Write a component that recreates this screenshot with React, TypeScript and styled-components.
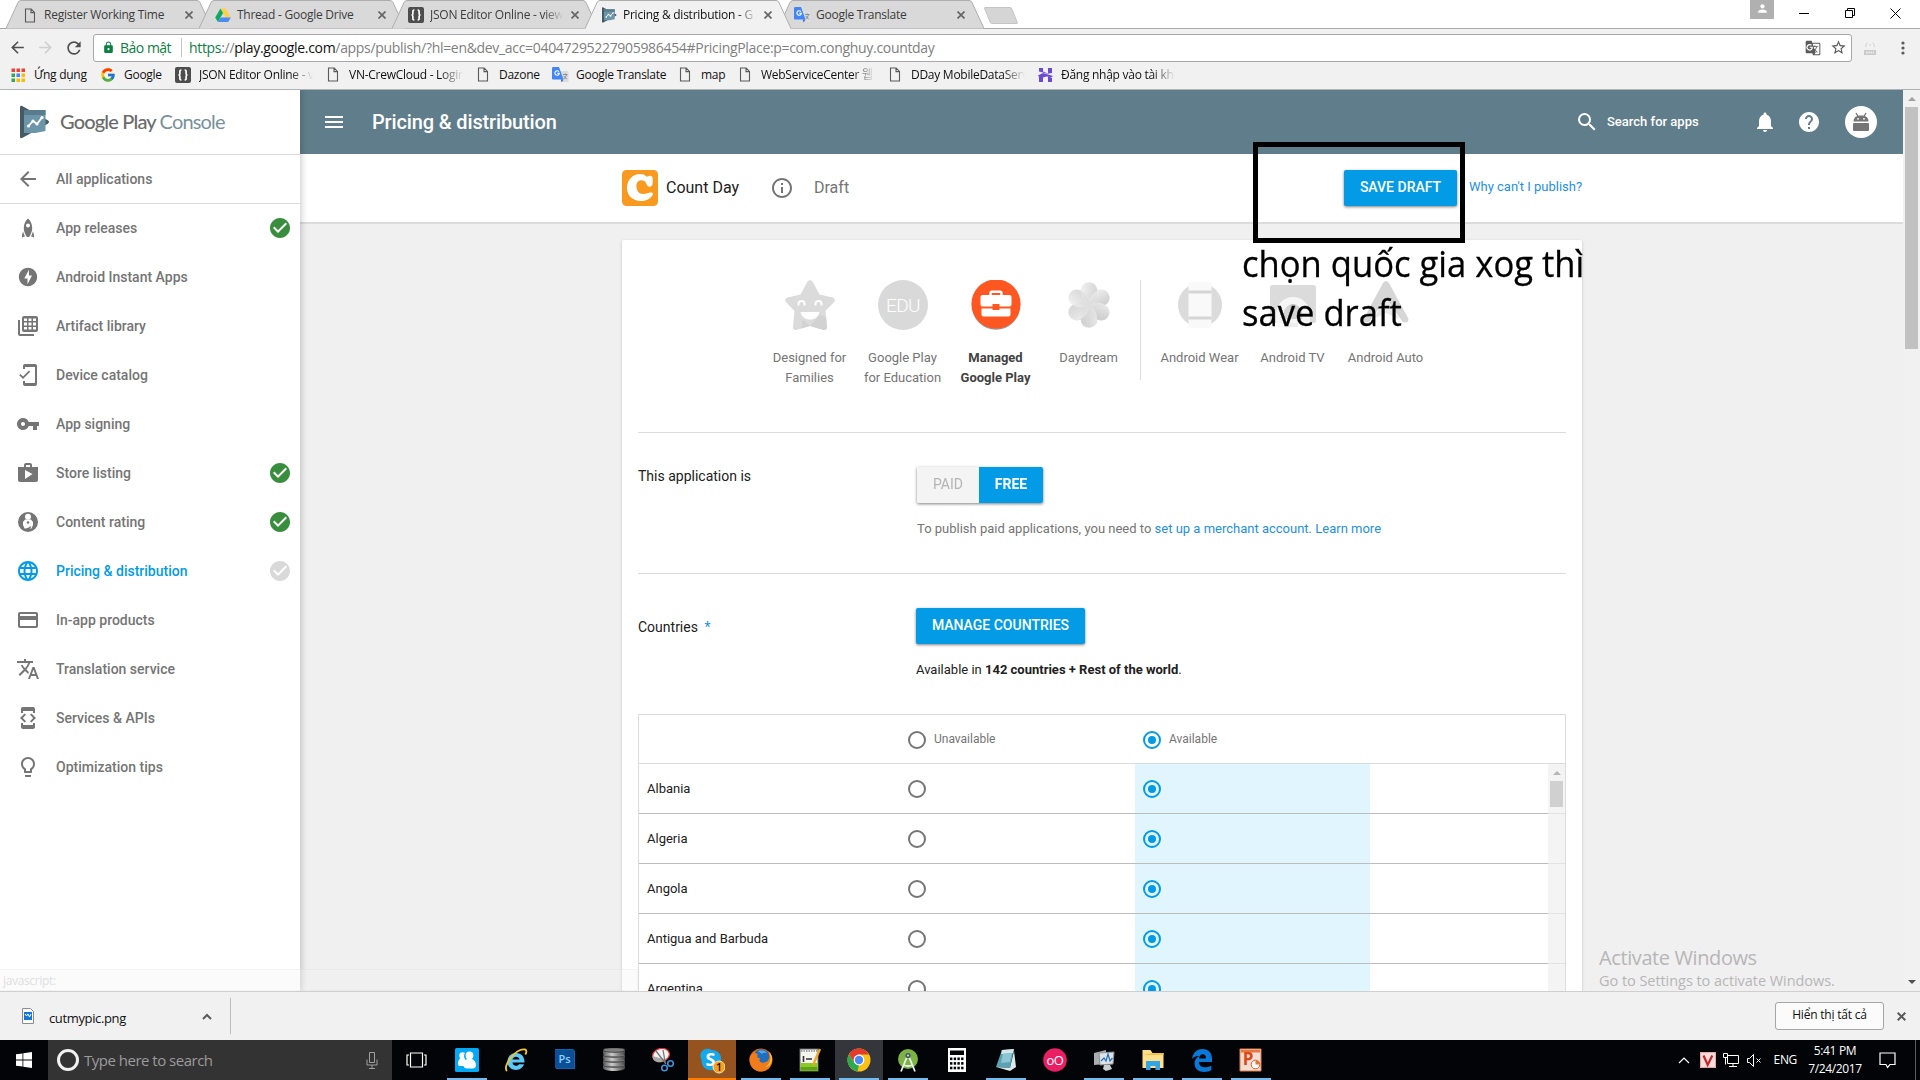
import React from "react";
import styled, { createGlobalStyle, css } from "styled-components";
import {
  MdArrowBack, MdArrowForward, MdRefresh, MdLock, MdMenu, MdSearch, MdNotifications, MdHelp,
  MdOfflineBolt, MdMobileFriendly, MdVpnKey, MdShop, MdLanguage, MdCreditCard, MdTranslate,
  MdDeveloperMode, MdLightbulbOutline, MdCheckCircle, MdInfoOutline, MdStarBorder, MdPerson,
  MdGTranslate,
} from "react-icons/md";
import { FcGoogle } from "react-icons/fc";

const UI = `"Open Sans", "Noto Sans", "Noto Sans CJK KR", sans-serif`;
const ROBOTO = `Roboto, "Liberation Sans", sans-serif`;

const Global = createGlobalStyle`
  * { box-sizing: border-box; }
  html, body { margin: 0; padding: 0; overflow: hidden; }
  svg { display: block; flex: none; }
`;

const Screen = styled.div`
  position: relative;
  display: flex;
  flex-direction: column;
  width: 1920px;
  height: 1080px;
  overflow: hidden;
  background: #f0f0f0;
  font-family: ${ROBOTO};
`;

/* ---------- browser frame ---------- */
const TabStrip = styled.div`
  display: flex;
  height: 29px;
  flex: none;
  padding-left: 6px;
  background: #fff;
  border-bottom: 1px solid #a9a9a9;
`;
const TabBox = styled.div<{ $active?: boolean }>`
  display: grid;
  grid-template-columns: 206px;
  width: 206px;
  height: 29px;
  margin-right: -13px;
  z-index: ${(p) => (p.$active ? 2 : 1)};
  > * { grid-area: 1 / 1; }
`;
const TabContent = styled.div`
  display: flex;
  align-items: center;
  height: 29px;
  padding: 1px 19px 0 16px;
`;
const TabIcon = styled.div`
  width: 16px;
  margin-right: 6px;
  display: flex;
  justify-content: center;
`;
const TabTitle = styled.span<{ $active?: boolean; $fade?: boolean }>`
  flex: 1;
  min-width: 0;
  margin-right: 8px;
  overflow: hidden;
  white-space: nowrap;
  font: 12px/18px ${UI};
  letter-spacing: -0.25px;
  color: ${(p) => (p.$active ? "#111" : "#3c3c3c")};
  ${(p) => p.$fade && css`mask-image: linear-gradient(90deg, #000 86%, transparent 100%);`}
`;
const NewTab = styled.div`
  width: 28px;
  height: 17px;
  margin: 7px 0 0 16px;
  background: #d5d5d5;
  border: 1px solid #c4c4c4;
  border-radius: 2px;
  transform: skewX(22deg);
`;
const WindowControls = styled.div`
  display: flex;
  margin-left: auto;
  padding-right: 19px;
  svg { margin-top: 8px; }
`;
const ProfileBadge = styled.div`
  display: flex;
  justify-content: center;
  width: 24px;
  height: 19px;
  margin-right: 25px;
  background: #b0b0b0;
  && svg { margin-top: 2px; }
`;
const Toolbar = styled.div`
  display: flex;
  align-items: center;
  flex: none;
  height: 35px;
  padding: 2px 0 0 8px;
  background: #f1f1f1;
  color: #4f4f4f;
`;
const NavButtons = styled.div`
  display: flex;
  align-items: center;
  gap: 9px;
  width: 85px;
`;
const AddressBar = styled.div`
  display: flex;
  align-items: center;
  width: 1759px;
  height: 28px;
  padding: 0 4px 0 8px;
  background: #fff;
  border: 1px solid #a8a8a8;
  border-radius: 3px;
`;
const Secure = styled.span`
  width: 62px;
  margin-left: 5px;
  border-right: 1px solid #c4c4c4;
  color: #0b8043;
  font: 14px/19px ${UI};
  letter-spacing: -0.5px;
  white-space: nowrap;
`;
const Url = styled.span`
  flex: 1;
  margin-left: 7px;
  padding-bottom: 1px;
  color: #808080;
  font: 14px/19px ${UI};
  letter-spacing: -0.315px;
  white-space: nowrap;
  b { font-weight: 400; color: #0b8043; }
  i { font-style: normal; color: #111; }
`;
const AddressIcons = styled.div`
  display: flex;
  align-items: center;
  gap: 9px;
`;
const Bookmarks = styled.div`
  display: flex;
  align-items: center;
  flex: none;
  height: 26px;
  padding: 0 0 4px 10px;
  background: #f1f1f1;
  border-bottom: 1px solid #aeb3b3;
`;
const Bookmark = styled.div<{ $w: number; $fade?: boolean }>`
  display: flex;
  align-items: center;
  width: ${(p) => p.$w}px;
  span {
    width: ${(p) => p.$w - (p.$fade ? 36 : 25)}px;
    margin-left: 8px;
    overflow: hidden;
    white-space: nowrap;
    color: #111;
    font: 12px/19px ${UI};
    letter-spacing: -0.27px;
    ${(p) => p.$fade && css`mask-image: linear-gradient(90deg, #000 80%, transparent 100%);`}
  }
`;
const BookmarkIcon = styled.div`
  display: flex;
  justify-content: center;
  width: 16px;
  flex: none;
`;

/* ---------- page frame ---------- */
const Page = styled.div`
  display: flex;
  flex: none;
  height: 901px;
  overflow: hidden;
`;
const Sidebar = styled.nav`
  width: 300px;
  flex: none;
  background: #fff;
  box-shadow: 0 0 8px rgba(0, 0, 0, 0.28);
  z-index: 3;
`;
const LogoRow = styled.div`
  display: flex;
  align-items: center;
  height: 65px;
  padding-left: 18px;
  border-bottom: 1px solid #dcdcdc;
`;
const LogoText = styled.div`
  margin: 0 0 3px 10px;
  color: #6b6b6b;
  font: 500 20px/28px Lato, sans-serif;
  letter-spacing: -0.83px;
  white-space: nowrap;
  span { color: #78909c; font-weight: 400; }
`;
const NavItem = styled.div<{ $active?: boolean; $line?: boolean }>`
  display: flex;
  align-items: center;
  height: 49px;
  padding: 0 10px ${(p) => (p.$line ? 0 : 1)}px 16px;
  color: ${(p) => (p.$active ? "#039be5" : "#757575")};
  font-size: 14px;
  font-weight: 500;
  border-bottom: ${(p) => (p.$line ? "1px solid #dcdcdc" : "0")};
  > span { flex: 1; margin-left: 16px; }
`;
const Main = styled.main`
  display: flex;
  flex-direction: column;
  width: 1603px;
  flex: none;
`;
const Header = styled.header`
  display: flex;
  align-items: center;
  flex: none;
  height: 64px;
  padding: 0 26px 0 22px;
  background: #607d8b;
  color: #fff;
`;
const HeaderTitle = styled.h1`
  flex: 1;
  margin: 0 0 0 26px;
  font-size: 20px;
  font-weight: 500;
  letter-spacing: -0.14px;
`;
const SearchLabel = styled.span`
  width: 146px;
  margin: 0 0 1px 8px;
  font-size: 13px;
  font-weight: 500;
`;
const Avatar = styled.div`
  display: flex;
  align-items: center;
  justify-content: center;
  width: 32px;
  height: 32px;
  margin-left: 24px;
  border-radius: 50%;
  background: #fff;
`;
const SubHeader = styled.div`
  display: flex;
  align-items: center;
  flex: none;
  height: 70px;
  padding: 0 322px;
  background: #fff;
  border-bottom: 2px solid #dcdcdc;
`;
const AppName = styled.span`
  width: 104px;
  margin: 0 0 2px 8px;
  color: #212121;
  font-size: 16px;
`;
const DraftLabel = styled.span`
  flex: 1;
  margin: 0 0 2px 20px;
  color: #757575;
  font-size: 16px;
`;
const Button = styled.button<{ $w: number }>`
  width: ${(p) => p.$w}px;
  height: 36px;
  padding: 0 0 2px;
  border: 0;
  border-radius: 2px;
  background: #039be5;
  box-shadow: 0 1px 3px rgba(0, 0, 0, 0.5);
  color: #fff;
  font: 500 14px/16px ${ROBOTO};
  white-space: nowrap;
`;
const Link = styled.a`
  color: #1e90e6;
  font-size: 13px;
`;
const WhyLink = styled(Link)`
  width: 112px;
  margin: 0 0 3px 12px;
  white-space: nowrap;
`;
const Card = styled.section`
  width: 960px;
  flex: none;
  height: 800px;
  margin: 16px 0 0 322px;
  padding: 40px 16px 0;
  border-radius: 2px;
  background: #fff;
  box-shadow: 0 1px 3px rgba(0, 0, 0, 0.22);
`;
const Programs = styled.div`
  display: flex;
  height: 153px;
  padding-left: 125px;
  border-bottom: 1px solid #dcdcdc;
`;
const Program = styled.div<{ $on?: boolean }>`
  display: flex;
  flex-direction: column;
  align-items: center;
  width: 93px;
  color: ${(p) => (p.$on ? "#424242" : "#757575")};
  font-size: 13px;
  font-weight: ${(p) => (p.$on ? 700 : 400)};
  line-height: 20px;
  text-align: center;
  white-space: pre-line;
  svg { margin-bottom: 18px; }
`;
const Divider = styled.div`
  width: 1px;
  height: 100px;
  margin: 0 12px 0 5px;
  background: #dcdcdc;
`;
const Section = styled.div<{ $h: number; $line?: boolean }>`
  display: flex;
  height: ${(p) => p.$h}px;
  border-bottom: ${(p) => (p.$line ? "1px solid #dcdcdc" : "0")};
`;
const SectionLabel = styled.div<{ $top: number }>`
  width: 278px;
  padding-top: ${(p) => p.$top}px;
  color: #212121;
  font-size: 14px;
  line-height: 20px;
  em { margin-left: 3px; color: #1e90e6; font-style: normal; }
`;
const SectionBody = styled.div`
  padding-top: 34px;
`;
const Toggle = styled.div`
  display: flex;
  width: 126px;
  height: 36px;
  margin-left: 1px;
  border-radius: 2px;
  overflow: hidden;
  background: #f4f4f4;
`;
const ToggleShadow = styled.div`
  width: 127px;
  filter: drop-shadow(0 1px 1.5px rgba(0, 0, 0, 0.5));
`;
const ToggleOption = styled.div<{ $on?: boolean }>`
  width: ${(p) => (p.$on ? 64 : 62)}px;
  background: ${(p) => (p.$on ? "#039be5" : "#f4f4f4")};
  color: ${(p) => (p.$on ? "#fff" : "#b4b4b4")};
  font-size: 14px;
  font-weight: ${(p) => (p.$on ? 700 : 400)};
  line-height: 35px;
  text-align: center;
`;
const Note = styled.p<{ $dark?: boolean }>`
  margin: 16px 0 0 ${(p) => (p.$dark ? 0 : 1)}px;
  color: ${(p) => (p.$dark ? "#212121" : "#757575")};
  font-size: 13px;
  line-height: 20px;
  b { font-weight: 700; }
`;
const Table = styled.div`
  display: flex;
  flex-direction: column;
  border: 1px solid #dcdcdc;
  width: 928px;
`;
const TableHead = styled.div`
  display: flex;
  height: 49px;
  border-bottom: 1px solid #dcdcdc;
  color: #757575;
  font-size: 12px;
`;
const TableBody = styled.div`
  display: flex;
`;
const Rows = styled.div`
  width: 909px;
`;
const ChoiceCell = styled.div<{ $tint?: boolean }>`
  display: flex;
  align-items: center;
  gap: 8px;
  width: 235px;
  padding-left: 8px;
  background: ${(p) => (p.$tint ? "#e1f5fe" : "transparent")};
`;
const Row = styled.div`
  display: flex;
  height: 50px;
  border-bottom: 1px solid #bdbdbd;
  color: #212121;
  font-size: 13px;
  ${ChoiceCell} { padding-bottom: 1px; }
`;
const NameCell = styled.div`
  display: flex;
  align-items: center;
  width: 261px;
  padding-left: 8px;
`;
const Radio = styled.span<{ $on?: boolean }>`
  display: flex;
  align-items: center;
  justify-content: center;
  width: 18px;
  height: 18px;
  margin-top: 2px;
  border: 2px solid ${(p) => (p.$on ? "#039be5" : "#757575")};
  border-radius: 50%;
  &::after {
    content: "";
    width: 8px;
    height: 8px;
    border-radius: 50%;
    background: ${(p) => (p.$on ? "#039be5" : "transparent")};
  }
`;
const InnerScroll = styled.div`
  display: flex;
  flex-direction: column;
  align-items: center;
  width: 17px;
  padding-top: 7px;
  background: repeating-linear-gradient(#f4f4f4 0 49px, #e2e2e2 49px 50px);
`;
const Arrow = styled.i<{ $down?: boolean; $c: string; $s: number }>`
  border: ${(p) => p.$s}px solid transparent;
  border-bottom: ${(p) => (p.$down ? "0" : `${p.$s}px solid ${p.$c}`)};
  border-top: ${(p) => (p.$down ? `${p.$s}px solid ${p.$c}` : "0")};
`;
const InnerThumb = styled.div`
  width: 13px;
  height: 26px;
  margin-top: 6px;
  background: #d0d0d0;
`;
const PageScroll = styled.div`
  display: flex;
  flex-direction: column;
  align-items: center;
  width: 17px;
  padding: 7px 0 7px;
  background: #f1f1f1;
`;
const PageThumb = styled.div`
  width: 13px;
  height: 242px;
  margin: 6px 0 auto;
  background: #c1c1c1;
`;

/* ---------- download bar and taskbar ---------- */
const Downloads = styled.div`
  display: flex;
  align-items: center;
  flex: none;
  height: 49px;
  padding: 0 14px 0 20px;
  background: #f1f1f1;
  border-top: 1px solid #cfcfcf;
  color: #111;
`;
const DownloadItem = styled.div`
  display: flex;
  align-items: center;
  width: 211px;
  height: 36px;
  border-right: 1px solid #bdbdbd;
  span { flex: 1; margin: 4px 0 0 13px; font: 13px/18px ${UI}; letter-spacing: -0.36px; }
  > svg:last-child { margin-right: 18px; }
`;
const ShowAll = styled.button`
  width: 109px;
  height: 28px;
  margin: 0 13px 0 auto;
  padding: 0 0 2px;
  background: #fbfbfb;
  border: 1px solid #a5a5a5;
  border-radius: 3px;
  color: #111;
  font: 12px/18px ${UI};
  letter-spacing: -0.2px;
`;
const Taskbar = styled.div`
  display: flex;
  flex: none;
  height: 40px;
  background: #020408;
  color: #fff;
`;
const Start = styled.div`
  display: flex;
  align-items: center;
  justify-content: center;
  width: 48px;
`;
const SearchBox = styled.div`
  display: flex;
  align-items: center;
  width: 344px;
  padding: 0 14px 0 9px;
  background: #333;
  color: #9b9b9b;
  span { flex: 1; margin-left: 5px; font: 15px/20px ${UI}; letter-spacing: -0.5px; }
`;
const Ring = styled.div`
  width: 22px;
  height: 22px;
  border: 3px solid #f2f2f2;
  border-radius: 50%;
`;
const TaskSlot = styled.div<{ $open?: boolean; $bg?: string; $line?: string }>`
  display: flex;
  flex-direction: column;
  align-items: center;
  width: 49px;
  padding-top: 8px;
  background: ${(p) => p.$bg || "transparent"};
  background-clip: padding-box;
  border-right: 1px solid transparent;
  &::after {
    content: "";
    flex: none;
    width: ${(p) => (p.$line ? 48 : 40)}px;
    height: 2px;
    margin-top: auto;
    background: ${(p) => (p.$open ? p.$line || "#76b9ed" : "transparent")};
  }
`;
const TaskView = styled.div`
  display: flex;
  align-items: center;
  justify-content: center;
  width: 51px;
  padding-right: 3px;
`;
const Tray = styled.div`
  display: flex;
  align-items: center;
  margin-left: auto;
  padding-right: 4px;
  font: 12px/18px ${UI};
  letter-spacing: -0.35px;
`;
const TrayGlyph = styled.div<{ $w: number }>`
  display: flex;
  width: ${(p) => p.$w}px;
`;
const Clock = styled.div`
  width: 56px;
  margin: 0 16px 0 10px;
  text-align: center;
  line-height: 18px;
`;
const ShowDesktop = styled.div`
  width: 1px;
  height: 40px;
  margin-left: 19px;
  background: #5a5c60;
`;

/* ---------- overlays ---------- */
const HighlightBox = styled.div`
  position: absolute;
  left: 1253px;
  top: 142px;
  width: 212px;
  height: 101px;
  border: 5px solid #000;
  z-index: 5;
`;
const Annotation = styled.div`
  position: absolute;
  left: 1242px;
  top: 239px;
  color: #000;
  font: 36px/49px "Open Sans", "Noto Sans", sans-serif;
  white-space: pre;
  transform: scaleX(0.961);
  transform-origin: 0 0;
  -webkit-text-stroke: 0.3px #000;
  z-index: 5;
`;
const Watermark = styled.div`
  position: absolute;
  left: 1599px;
  top: 944px;
  color: #b6b6b6;
  font: 14.5px/18px ${UI};
  letter-spacing: -0.05px;
  white-space: nowrap;
  strong { display: block; font-size: 20px; line-height: 28px; font-weight: 400; letter-spacing: -0.4px; }
`;
const StatusBubble = styled.div`
  position: absolute;
  left: 0;
  top: 969px;
  width: 638px;
  height: 22px;
  padding-left: 3px;
  background: rgba(242, 242, 242, 0.3);
  border: 1px solid rgba(190, 190, 190, 0.12);
  border-left: 0;
  color: #dedede;
  font: 12px/22px ${UI};
  letter-spacing: -0.35px;
  z-index: 6;
`;

/* ---------- drawings ---------- */
const PageGlyph = () => (
  <svg width="12" height="15" viewBox="0 0 12 15" fill="none" stroke="#5a5a5a" strokeWidth="1.1">
    <path d="M1.5 1h5.7L10.5 4.4V14h-9zM7 1v3.6h3.5" />
  </svg>
);
const DriveGlyph = () => (
  <svg width="16" height="16" viewBox="0 0 16 16">
    <path d="M5.4 1.5h5.2l5.2 9h-5.2z" fill="#ffcf48" />
    <path d="M5.4 1.5l2.7 4.6-5.2 8.9L.2 10.5z" fill="#11a861" />
    <path d="M5.6 10.5h10.2L13.2 15H3z" fill="#4b8af5" />
  </svg>
);
const BracesGlyph = () => (
  <svg width="16" height="16" viewBox="0 0 16 16">
    <rect width="16" height="16" rx="2" fill="#4d4d4d" />
    <path d="M6.4 3C4.6 3 4.9 4 4.9 6S4.5 8 3.4 8c1.1 0 1.5 0 1.5 2s-.3 3 1.5 3M9.6 3c1.8 0 1.5 1 1.5 3s.4 2 1.5 2c-1.1 0-1.5 0-1.5 2s.3 3-1.5 3" fill="none" stroke="#fff" strokeWidth="1.7" />
  </svg>
);
const ConsoleGlyph = ({ w = 16, h = 16 }: { w?: number; h?: number }) => (
  <svg width={w} height={h} viewBox="0 0 32 34" preserveAspectRatio="none">
    <path d="M2 2.5C2 .8 3.2.3 4.6 1.2L29.8 15.3c1.6.9 1.6 2.5 0 3.4L4.6 32.8C3.2 33.7 2 33.2 2 31.5z" fill="#455a64" />
    <path d="M6 5h21.500v21l-10 2H6z" fill="#6b96aa" />
    <path d="M6 5h21.500v5H6z" fill="#587c8d" />
    <path d="M10.500 21l4.500-5 4 3 5-6.500" fill="none" stroke="#fff" strokeWidth="1.8" />
    <circle cx="10.500" cy="21" r="1.600" fill="#fff" /><circle cx="15" cy="16" r="1.600" fill="#fff" />
    <circle cx="19" cy="19" r="1.600" fill="#fff" /><circle cx="24" cy="12.500" r="1.600" fill="#fff" />
  </svg>
);
const TranslateGlyph = () => (
  <svg width="17" height="16" viewBox="0 0 17 16">
    <path d="M7 4h8.500q1 0 1 1v9q0 1-1 1H10z" fill="#dcdcdc" />
    <path d="M1.200 0H7l4.500 12.500H1.200Q0 12.500 0 11.300V1.200Q0 0 1.200 0z" fill="#4285f4" />
    <path d="M8.800 12.500h2.700L9.600 15.500z" fill="#3367d6" />
    <path d="M6.900 4.700A2.200 2.200 0 1 0 7.300 6.300H5.200" fill="none" stroke="#fff" strokeWidth="1.100" />
    <path d="M11 7.500h4.500M13.200 6.500v1M14.600 7.500q-.8 3-2.800 4.500M11.800 9q1 2 3 3" fill="none" stroke="#7d8a94" strokeWidth=".9" />
  </svg>
);
const AppsGlyph = () => (
  <svg width="14" height="14" viewBox="0 0 14 14">
    {["#ea4335", "#ea4335", "#ea4335", "#34a853", "#4285f4", "#fbbc05", "#34a853", "#fbbc05", "#fbbc05"].map((c, i) => (
      <rect key={i} x={(i % 3) * 5 + 0.500} y={Math.floor(i / 3) * 5 + 0.500} width="3.500" height="3.500" fill={c} />
    ))}
  </svg>
);
const HGlyph = () => (
  <svg width="15" height="16" viewBox="0 0 15 16" fill="#6a4bd0">
    <path d="M1 1h4v3.500l5 2V1h4v5L9.500 6.800 1 4.500zM1 15h4v-4.500L10 9v6h4v-4L5 7.500 1 9.500z" />
    <path d="M0 8.500L5 6l10 3-2 1.500-8-2.200L1 10z" />
  </svg>
);
const RocketGlyph = () => (
  <svg width="24" height="24" viewBox="0 0 24 24" fill="#757575">
    <path fillRule="evenodd" d="M12 2.500c3 2.500 4.200 6 4.200 9.500 0 2.800-.8 5-2 7l-1 2h-2.400l-1-2c-1.200-2-2-4.200-2-7 0-3.500 1.200-7 4.200-9.500zm0 5a2 2 0 1 0 0 4 2 2 0 0 0 0-4z" />
    <path d="M7.200 15.500c.4 2 1 3.500 1.900 4.800L6 21.500c0-2.500.2-4.500 1.200-6zM16.800 15.500c-.4 2-1 3.500-1.900 4.800l3.100 1.200c0-2.500-.2-4.500-1.200-6z" />
  </svg>
);
const GridGlyph = () => (
  <svg width="24" height="24" viewBox="0 0 24 24" fill="#757575">
    <path fillRule="evenodd" d="M8 2h12a2 2 0 0 1 2 2v12a2 2 0 0 1-2 2H8a2 2 0 0 1-2-2V4a2 2 0 0 1 2-2zm0 2.500V7h3V4.500zm4.500 0V7h3V4.500zm4.500 0V7h3V4.500zM8 8.500v3h3v-3zm4.500 0v3h3v-3zm4.500 0v3h3v-3zM8 13v2.500h3V13zm4.500 0v2.500h3V13zm4.500 0v2.500h3V13z" />
    <path d="M2 6h2v14h14v2H4a2 2 0 0 1-2-2z" />
  </svg>
);
const RatingGlyph = () => (
  <svg width="24" height="24" viewBox="0 0 24 24">
    <circle cx="12" cy="12" r="10" fill="#757575" />
    <circle cx="12" cy="6.700" r="3" fill="#fff" />
    <path d="M9 9.500h6l2 2.500v3l-1.500 3.500h-7L7 15v-3z" fill="#fff" />
    <circle cx="12" cy="12.500" r="1.300" fill="#757575" />
    <path d="M9.500 20.500c0-2 5-1.500 5-4" stroke="#757575" strokeWidth="1.600" fill="none" />
  </svg>
);
const DroidGlyph = () => (
  <svg width="18" height="20" viewBox="0 0 18 20" fill="#757575">
    <path d="M1.500 9.500C1.500 5 5 3.500 9 3.500s7.500 1.500 7.500 6z" />
    <path d="M4 1l1.800 3M14 1l-1.800 3" stroke="#757575" strokeWidth="1.300" />
    <rect x="1" y="11" width="16" height="8" rx="1" />
    <circle cx="6" cy="6.800" r=".9" fill="#fff" /><circle cx="12" cy="6.800" r=".9" fill="#fff" />
  </svg>
);
const CountDayGlyph = () => (
  <svg width="36" height="36" viewBox="0 0 36 36">
    <rect width="36" height="36" rx="4.500" fill="#f89a20" />
    <path d="M24.500 6.500C26 6.800 27 5.500 28.500 5.800c2 .5 2.300 2 2.300 4.500 0 3.500-.3 6.200-2.600 6.500-2.500.4-3-1.700-4.200-3.800-1-1.900-2.400-2.800-4.600-2.800-3.200 0-5 2.300-5 5.800 0 4.500 2.600 8 6.600 8 4.200 0 6.500-2.200 9.200-1.300 1.200.4.800 2-.4 3.500-2.300 3-6 4.800-10.800 4.800C10.500 31 5 25.500 5 18 5 10 10.500 4 18.500 4c2.300 0 4.200.8 6 2.500z" fill="#fff" />
  </svg>
);
const StarGlyph = () => (
  <svg width="50" height="50" viewBox="0 0 50 50">
    <path d="M22.500 1.500Q25-1.200 27.500 1.500L34.500 14.500 47.500 17.500Q51 18.800 49.300 21.800L40.500 31 42 47Q42 50.500 38.500 50L25 46 11.500 50Q8 50.500 8 47L9.500 31 .7 21.800Q-1 18.800 2.500 17.500L15.500 14.500z" fill="#dbdbdb" />
    <path d="M18 39.500L25 46l9.500-11 6.500 2 1 10Q42 50.500 38.500 50L25 46l-9 2.600z" fill="#d2d2d2" />
    <path d="M13.500 25.500v-1.500a3 3 0 0 1 6 0v1.500M30.500 25.500v-1.500a3 3 0 0 1 6 0v1.500" fill="none" stroke="#fff" strokeWidth="2" />
    <path d="M15.500 32h19c-1 5-5 7.500-9.500 7.500S16.500 37 15.500 32z" fill="#fff" />
  </svg>
);
const EduGlyph = () => (
  <svg width="50" height="50" viewBox="0 0 50 50">
    <circle cx="25" cy="25" r="25" fill="#d9d9d9" />
    <text x="25" y="31.800" textAnchor="middle" fontFamily="Roboto" fontWeight="300" fontSize="19" letterSpacing="-.6" fill="#fff">EDU</text>
  </svg>
);
const BriefcaseGlyph = () => (
  <svg width="50" height="50" viewBox="0 0 50 50">
    <circle cx="25" cy="25.800" r="24" fill="#9a9a9a" />
    <circle cx="25" cy="24" r="24.600" fill="#ff5722" />
    <path d="M19.500 16v-2.800a1.500 1.500 0 0 1 1.500-1.500h8a1.500 1.500 0 0 1 1.500 1.500V16" fill="none" stroke="#fff" strokeWidth="2.400" />
    <path d="M11.500 15h27a2 2 0 0 1 2 2v7.500a2 2 0 0 1-2 2H28.500V24h-7v2.500h-10a2 2 0 0 1-2-2V17a2 2 0 0 1 2-2z" fill="#fff" />
    <path d="M10.500 28.500h11V30h7v-1.500h11V34.500a2 2 0 0 1-2 2h-25a2 2 0 0 1-2-2z" fill="#fff" />
  </svg>
);
const DaydreamGlyph = () => (
  <svg width="50" height="50" viewBox="0 0 50 50">
    <defs>
      <linearGradient id="petal" gradientUnits="userSpaceOnUse" x1="10" y1="8" x2="40" y2="42">
        <stop offset="0" stopColor="#ebebeb" /><stop offset="1" stopColor="#d0d0d0" />
      </linearGradient>
      <linearGradient id="shade" gradientUnits="userSpaceOnUse" x1="17" y1="0" x2="34" y2="0">
        <stop offset="0" stopColor="#fff" stopOpacity=".45" /><stop offset="1" stopColor="#bbb" stopOpacity=".3" />
      </linearGradient>
    </defs>
    <circle cx="25" cy="25" r="13" fill="url(#petal)" />
    {[0, 60, 120, 180, 240, 300].map((a) => {
      const r = ((a - 90) * Math.PI) / 180;
      return <circle key={a} cx={25 + 14 * Math.cos(r)} cy={25 + 14.500 * Math.sin(r)} r="8.300" fill="url(#petal)" />;
    })}
    {[0, 60, 120, 180, 240, 300].map((a) => (
      <path key={a} d="M25 25C17 20 15 11 19 5 24 0 33 2 33.300 10.500 33 17 30 21 25 25z" fill="url(#shade)" transform={`rotate(${a} 25 25)`} />
    ))}
  </svg>
);
const WearGlyph = () => (
  <svg width="50" height="50" viewBox="0 0 50 50">
    <circle cx="25" cy="25" r="22" fill="#dbdbdb" />
    <rect x="13.500" y="2" width="23" height="46" fill="#f9f9f9" />
    <path d="M13.500 10.500h23v3h-23zM13.500 36.500h23v3h-23z" fill="#d5d5d5" />
  </svg>
);
const TvGlyph = () => (
  <svg width="50" height="50" viewBox="0 0 50 50">
    <rect x="2" y="5" width="46" height="38" rx="2.500" fill="#dbdbdb" />
    <path d="M8 34a17 17 0 0 1 34 0v9H8z" fill="#f6f6f6" />
    <path d="M16 33a9 9 0 0 1 18 0v6H16z" fill="#d5d5d5" />
    <circle cx="25" cy="27" r="3" fill="#c4c4c4" />
    <path d="M20 43h10v4H20z" fill="#eee" />
  </svg>
);
const AutoGlyph = () => (
  <svg width="50" height="50" viewBox="0 0 50 50">
    <path d="M22 3q3-4 6 0l19 35q1.500 4-2 4.500-2 .3-4-1.500L25 18 9 41q-2 1.800-4 1.500-3.500-.5-2-4.500z" fill="#d6d6d6" />
    <path d="M25 17l13 22-13-6-13 6z" fill="#e9e9e9" />
  </svg>
);
const SnipGlyph = () => (
  <svg width="24" height="24" viewBox="0 0 24 24">
    <ellipse cx="10" cy="7" rx="8.500" ry="6.500" fill="#f2f2f2" stroke="#d9333a" strokeWidth="1.300" transform="rotate(-15 10 7)" />
    <path d="M1.500 8c0 5 4 7 9 6l5-3-7-1z" fill="#a9a9a9" />
    <path d="M5 3l10 13M12 2l2.500 14" stroke="#777" strokeWidth="1.300" />
    <circle cx="13.500" cy="20" r="2.800" fill="none" stroke="#3d8fd8" strokeWidth="1.600" />
    <circle cx="19.500" cy="15.500" r="2.800" fill="none" stroke="#3d8fd8" strokeWidth="1.600" />
  </svg>
);

const taskIcons: { el: React.ReactNode; open?: boolean; bg?: string; line?: string }[] = [
  { open: true, el: <svg width="24" height="24" viewBox="0 0 24 24"><rect width="24" height="24" rx="1.500" fill="#03a9f4" /><g fill="#fff"><circle cx="7.500" cy="7.500" r="3.200" /><path d="M3 16c0-4 2-6.500 4.500-6.500s4 2 4 4L9 18H5q-2 0-2-2z" /><circle cx="14" cy="8" r="5" fill="#03a9f4" /><circle cx="14.500" cy="7.500" r="3.900" /><path d="M8.500 17.500c0-4 2.500-7 5.800-7 4.200 0 6.700 3.500 6.700 6.500 0 2.800-2 3.500-4 3.500h-4.700q-3.800 0-3.800-3z" /></g></svg> },
  { el: <svg width="24" height="24" viewBox="0 0 24 24"><path d="M20.500 14.500H8.500c.3 3.500 4.500 4.500 6.500 1.800h5c-1.500 4-4.500 5.700-8 5.700-5.500 0-8.500-4-8.500-8.500C3.500 8.500 7.200 5 12 5c5.500 0 8.700 4 8.500 9.500zM8.500 11.500h7c-.5-3.500-6-3.800-7 0z" fill="#5cc8f5" /><path d="M3 23C-2 18 12 0 21 1.500c2 .5 1.500 3 .3 5" fill="none" stroke="#f2c230" strokeWidth="1.900" /></svg> },
  { el: <svg width="24" height="24" viewBox="0 0 24 24"><path d="M2 1h18l2 2v18H3z" fill="#0a66b5" /><rect x="2" y="2" width="19" height="18" fill="#0b4f96" /><text x="11.500" y="15" textAnchor="middle" fontFamily="Open Sans" fontWeight="600" fontSize="11" fill="#8fd0ff">Ps</text></svg> },
  { el: <svg width="24" height="24" viewBox="0 0 24 24"><defs><linearGradient id="disk"><stop offset="0" stopColor="#555" /><stop offset=".4" stopColor="#ccc" /><stop offset="1" stopColor="#444" /></linearGradient></defs>{[17, 12, 7, 2].map((y) => <g key={y}><path d={`M1 ${y}v3c0 4 22 4 22 0v-3z`} fill="url(#disk)" /><ellipse cx="12" cy={y} rx="11" ry="2.300" fill="#808080" stroke="#333" strokeWidth=".8" /></g>)}</svg> },
  { el: <SnipGlyph /> },
  { open: true, bg: "#95541f", line: "#ff7b00", el: <svg width="26" height="26" viewBox="0 0 26 26"><path d="M7 1c2-.5 4 0 5.500 1C19 2 23 7 22 12.500c2 4-1 8.500-5 9-8 2.500-15-1.500-14.500-10C0 7 2 2 7 1z" fill="#12a9ef" /><text x="11.500" y="18" textAnchor="middle" fontFamily="Open Sans" fontWeight="700" fontSize="18" fill="#fff">S</text><circle cx="20" cy="19" r="6" fill="#f9a01b" stroke="#ffe3a8" /><text x="20" y="23" textAnchor="middle" fontFamily="Open Sans" fontWeight="600" fontSize="10.500" fill="#111">1</text></svg> },
  { open: true, el: <svg width="24" height="24" viewBox="0 0 24 24"><circle cx="12" cy="12" r="11.500" fill="#e66000" /><circle cx="12.500" cy="9.500" r="8.300" fill="#1f6fc0" /><path d="M9 3q6-2 9 2-4-1-5 1z" fill="#5aa7e0" /><path d="M1 8c2-1 3-4 5-5-1 2 1 3 3 3-2 3 0 4 2 4-2 4 2 6 6 4 4-2 4-7 2.500-10.500C26 8 24 23 12 23.500 4 23.500-1 16 1 8z" fill="#f07c1c" /><path d="M19.500 4c4 5 2 12-3 15 6-1 8-8 5-13z" fill="#ffcb3c" /></svg> },
  { open: true, el: <svg width="24" height="24" viewBox="0 0 24 24"><rect x="2" y="1" width="18" height="22" fill="#f4f6ef" stroke="#666" /><path d="M2.500 15h17v8h-17z" fill="#8bc926" /><path d="M2.500 19h17v3.500h-17z" fill="#5ea317" /><path d="M5.500 8v6M8 11h6" stroke="#333" strokeWidth="1.600" /><path d="M3 3h16" stroke="#8a8a8a" strokeWidth="1.600" strokeDasharray="1.500 1" /><path d="M22 1l-7 16" stroke="#f0a52b" strokeWidth="2.400" /></svg> },
  { open: true, bg: "#33373c", el: <svg width="24" height="24" viewBox="0 0 24 24"><circle cx="12" cy="12" r="11.500" fill="#fbc116" /><path d="M2 6.200A11.500 11.500 0 0 1 22 6.500H12L7 14.700z" fill="#e33b2e" /><path d="M2 6.200L7 14.700 12 17l-1.500 6.400A11.500 11.500 0 0 1 2 6.200z" fill="#2da94f" /><circle cx="12" cy="12" r="5.400" fill="#fff" /><circle cx="12" cy="12" r="4.200" fill="#4a8af4" /></svg> },
  { open: true, el: <svg width="24" height="24" viewBox="0 0 24 24"><circle cx="12" cy="11" r="10" fill="#7cb342" /><path d="M5 23.500L11 9h2l6 14.500M7.500 17q4.500 2 9 0" stroke="#e9eef0" strokeWidth="1.800" fill="none" /><circle cx="12" cy="7.500" r="2.600" fill="#455a64" /><circle cx="12" cy="7.500" r="1.100" fill="#cfd8dc" /></svg> },
  { el: <svg width="24" height="24" viewBox="0 0 24 24"><rect x="3" width="18" height="24" fill="#fff" /><rect x="5" y="2.500" width="14" height="4.500" fill="#020408" />{[0, 1, 2, 3, 4, 5, 6, 7, 8, 9, 10, 11].map((n) => <rect key={n} x={5 + (n % 4) * 3.700} y={9.500 + Math.floor(n / 4) * 4.600} width="2.400" height="2.600" fill="#020408" />)}</svg> },
  { open: true, el: <svg width="24" height="24" viewBox="0 0 24 24"><path d="M8 2l12-1-4 19-14-1z" fill="#5aa3b5" /><path d="M8 2l12-1-1 4-12 1z" fill="#d5e6ea" /><path d="M2 19l14 1 4-17 2 16-6 4z" fill="#dfe9eb" /><path d="M9 6l9-1-2 9-9 1z" fill="#8cc6d3" /></svg> },
  { el: <svg width="24" height="24" viewBox="0 0 24 24"><circle cx="12" cy="12" r="11.800" fill="#e91e63" /><text x="12" y="17" textAnchor="middle" fontFamily="Open Sans" fontSize="13" fill="#fff" letterSpacing="-.5">oO</text></svg> },
  { open: true, el: <svg width="24" height="24" viewBox="0 0 24 24"><path d="M2 5l12-3v14l-12 1z" fill="#a9adb0" /><path d="M7 5l15-1-1 12-13 1z" fill="#dfe3e6" stroke="#8b9196" /><path d="M9 13l3-3 2 3 2-7 2 7 2.500-3" fill="none" stroke="#2372c4" strokeWidth="1.200" /><path d="M12 17h6l2 4-6 2-3-2z" fill="#c9ced1" /></svg> },
  { open: true, el: <svg width="24" height="24" viewBox="0 0 24 24"><path d="M1.500 2h8l2 3h11v15h-21z" fill="#ffe08a" /><path d="M1.500 7h21v-2h-11z" fill="#f2c14e" /><path d="M5 13h14v9h-4.500v-4h-5v4H5z" fill="#33a4e8" /></svg> },
  { open: true, el: <svg width="24" height="24" viewBox="0 0 24 24"><path d="M2 11C3 4 7.500 1 12.500 1 19 1 22 5.500 22 10.500V14H9c.2 4 3 5.300 6.300 5.300 2.400 0 4.500-.6 6-1.500v4.500c-2 1.200-4.500 1.700-7.300 1.700-6 0-9.500-4-9.500-8.500 0-3.500 2-6.300 4.800-7.500C5.500 8 3.300 9 2 11zm7-.6h7c0-6-6.600-5-7 0z" fill="#0a78d7" /></svg> },
  { open: true, el: <svg width="24" height="24" viewBox="0 0 24 24"><path d="M1 1h21v22H1z" fill="#f4ded2" stroke="#e07a46" /><path d="M2 2h19v2.500H2z" fill="#e8763f" /><text x="9" y="17" textAnchor="middle" fontFamily="Open Sans" fontWeight="700" fontSize="17" fill="#d9481a">P</text><circle cx="16.500" cy="16.500" r="4.300" fill="#fff" stroke="#e05a1f" /><path d="M16.500 16.500v-4.300a4.300 4.300 0 0 1 4.300 4.300z" fill="#e8703a" /></svg> },
];

const TabShape = ({ active }: { active?: boolean }) => (
  <svg width="206" height="29" viewBox="0 0 206 29">
    <path d="M0 28.500L12 2.500Q13 .5 15 .5H191Q193 .5 194 2.500L206 28.500" fill={active ? "#f1f1f1" : "#d9d9d9"} stroke="#adadad" />
    {active && <path d="M.8 28.500h204.400" stroke="#f1f1f1" strokeWidth="1.400" />}
  </svg>
);

const tabs = [
  { title: "Register Working Time", icon: <PageGlyph /> },
  { title: "Thread - Google Drive", icon: <DriveGlyph /> },
  { title: "JSON Editor Online - view", icon: <BracesGlyph />, fade: true },
  { title: "Pricing & distribution - G", icon: <ConsoleGlyph />, active: true, fade: true },
  { title: "Google Translate", icon: <TranslateGlyph /> },
];
const bookmarks = [
  { w: 90, t: "Ứng dụng", icon: <AppsGlyph /> },
  { w: 75, t: "Google", icon: <FcGoogle size={16} /> },
  { w: 150, t: "JSON Editor Online - v", icon: <BracesGlyph />, fade: true },
  { w: 150, t: "VN-CrewCloud - Login", icon: <PageGlyph />, fade: true },
  { w: 77, t: "Dazone", icon: <PageGlyph /> },
  { w: 125, t: "Google Translate", icon: <TranslateGlyph /> },
  { w: 60, t: "map", icon: <PageGlyph /> },
  { w: 150, t: "WebServiceCenter 웹", icon: <PageGlyph />, fade: true },
  { w: 150, t: "DDay MobileDataServ", icon: <PageGlyph />, fade: true },
  { w: 150, t: "Đăng nhập vào tài kho", icon: <HGlyph />, fade: true },
];
const navItems = [
  { t: "App releases", icon: <RocketGlyph />, check: "#388e3c" },
  { t: "Android Instant Apps", icon: <MdOfflineBolt size={22} style={{ margin: 1 }} /> },
  { t: "Artifact library", icon: <GridGlyph /> },
  { t: "Device catalog", icon: <MdMobileFriendly size={24} /> },
  { t: "App signing", icon: <MdVpnKey size={24} /> },
  { t: "Store listing", icon: <MdShop size={24} />, check: "#388e3c" },
  { t: "Content rating", icon: <RatingGlyph />, check: "#388e3c" },
  { t: "Pricing & distribution", icon: <MdLanguage size={24} />, check: "#d9d9d9", active: true },
  { t: "In-app products", icon: <MdCreditCard size={24} /> },
  { t: "Translation service", icon: <MdTranslate size={24} /> },
  { t: "Services & APIs", icon: <MdDeveloperMode size={24} /> },
  { t: "Optimization tips", icon: <MdLightbulbOutline size={24} /> },
];
const programs = [
  { t: "Designed for\nFamilies", icon: <StarGlyph /> },
  { t: "Google Play\nfor Education", icon: <EduGlyph /> },
  { t: "Managed\nGoogle Play", icon: <BriefcaseGlyph />, on: true },
  { t: "Daydream", icon: <DaydreamGlyph /> },
];
const devices = [
  { t: "Android Wear", icon: <WearGlyph /> },
  { t: "Android TV", icon: <TvGlyph /> },
  { t: "Android Auto", icon: <AutoGlyph /> },
];
const countries = ["Albania", "Algeria", "Angola", "Antigua and Barbuda", "Argentina"];

export default function App() {
  return (
    <Screen>
      <Global />
      <TabStrip>
        {tabs.map((t) => (
          <TabBox key={t.title} $active={t.active}>
            <TabShape active={t.active} />
            <TabContent>
              <TabIcon>{t.icon}</TabIcon>
              <TabTitle $active={t.active} $fade={t.fade}>{t.title}</TabTitle>
              <svg width="8" height="8" viewBox="0 0 8 8" stroke="#666" strokeWidth="1.700"><path d="M.5.5l7 7M7.500.5l-7 7" /></svg>
            </TabContent>
          </TabBox>
        ))}
        <NewTab />
        <WindowControls>
          <ProfileBadge><MdPerson size={13} color="#fff" /></ProfileBadge>
          <svg width="46" height="11" viewBox="0 0 46 11"><path d="M0 5.500h10" stroke="#000" /></svg>
          <svg width="45" height="11" viewBox="0 0 45 11" fill="none" stroke="#000"><path d="M.5 2.500h7v7h-7zM2.500 2.500v-2h7v7h-2" /></svg>
          <svg width="11" height="11" viewBox="0 0 11 11" stroke="#000"><path d="M.5.5l10 10M10.500.5l-10 10" /></svg>
        </WindowControls>
      </TabStrip>
      <Toolbar>
        <NavButtons>
          <MdArrowBack size={19} />
          <MdArrowForward size={19} color="#cfcfcf" />
          <MdRefresh size={20} />
        </NavButtons>
        <AddressBar>
          <MdLock size={13} color="#0b8043" />
          <Secure>Bảo mật</Secure>
          <Url><b>https</b>://<i>play.google.com</i>/apps/publish/?hl=en&amp;dev_acc=04047295227905986454#PricingPlace:p=com.conghuy.countday</Url>
          <AddressIcons>
            <MdGTranslate size={16} color="#5a5a5a" />
            <MdStarBorder size={17} color="#5a5a5a" />
          </AddressIcons>
        </AddressBar>
        <svg width="14" height="15" viewBox="0 0 14 15" style={{ marginLeft: 11 }}>
          <path d="M4.500 3q-1.500 0-1.500 2T2 7M9.500 3q1.500 0 1.500 2t1 2M6 5h2" stroke="#d2d2d2" fill="none" />
          <rect x="1" y="10" width="12" height="5" fill="#c9c9c9" />
          <path d="M3 12.500h8" stroke="#eee" strokeWidth="2" strokeDasharray="1.500 .8" />
        </svg>
        <svg width="4" height="14" viewBox="0 0 4 14" fill="#5a5a5a" style={{ marginLeft: 24 }}><circle cx="2" cy="2" r="1.600" /><circle cx="2" cy="7" r="1.600" /><circle cx="2" cy="12" r="1.600" /></svg>
      </Toolbar>
      <Bookmarks>
        {bookmarks.map((b) => (
          <Bookmark key={b.t} $w={b.w} $fade={b.fade}>
            <BookmarkIcon>{b.icon}</BookmarkIcon>
            <span>{b.t}</span>
          </Bookmark>
        ))}
      </Bookmarks>

      <Page>
        <Sidebar>
          <LogoRow>
            <ConsoleGlyph w={32} h={34} />
            <LogoText>Google Play <span>Console</span></LogoText>
          </LogoRow>
          <NavItem $line><MdArrowBack size={24} /><span>All applications</span></NavItem>
          {navItems.map((n) => (
            <NavItem key={n.t} $active={n.active}>
              {n.icon}
              <span>{n.t}</span>
              {n.check && <MdCheckCircle size={24} color={n.check} style={{ margin: -2 }} />}
            </NavItem>
          ))}
        </Sidebar>
        <Main>
          <Header>
            <MdMenu size={24} />
            <HeaderTitle>Pricing &amp; distribution</HeaderTitle>
            <MdSearch size={24} />
            <SearchLabel>Search for apps</SearchLabel>
            <MdNotifications size={24} />
            <MdHelp size={24} style={{ marginLeft: 20 }} />
            <Avatar><DroidGlyph /></Avatar>
          </Header>
          <SubHeader>
            <CountDayGlyph />
            <AppName>Count Day</AppName>
            <MdInfoOutline size={24} color="#757575" />
            <DraftLabel>Draft</DraftLabel>
            <Button $w={113}>SAVE DRAFT</Button>
            <WhyLink>Why can't I publish?</WhyLink>
          </SubHeader>
          <Card>
            <Programs>
              {programs.map((p) => <Program key={p.t} $on={p.on}>{p.icon}{p.t}</Program>)}
              <Divider />
              {devices.map((p) => <Program key={p.t}>{p.icon}{p.t}</Program>)}
            </Programs>
            <Section $h={141} $line>
              <SectionLabel $top={33}>This application is</SectionLabel>
              <SectionBody>
                <ToggleShadow>
                  <Toggle><ToggleOption>PAID</ToggleOption><ToggleOption $on>FREE</ToggleOption></Toggle>
                </ToggleShadow>
                <Note>To publish paid applications, you need to <Link>set up a merchant account</Link>. <Link>Learn more</Link></Note>
              </SectionBody>
            </Section>
            <Section $h={140}>
              <SectionLabel $top={43}>Countries <em>*</em></SectionLabel>
              <SectionBody>
                <Button $w={169}>MANAGE COUNTRIES</Button>
                <Note $dark>Available in <b>142 countries + Rest of the world</b>.</Note>
              </SectionBody>
            </Section>
            <Table>
              <TableHead>
                <NameCell />
                <ChoiceCell><Radio /><span>Unavailable</span></ChoiceCell>
                <ChoiceCell><Radio $on /><span>Available</span></ChoiceCell>
              </TableHead>
              <TableBody>
                <Rows>
                  {countries.map((c) => (
                    <Row key={c}>
                      <NameCell>{c}</NameCell>
                      <ChoiceCell><Radio /></ChoiceCell>
                      <ChoiceCell $tint><Radio $on /></ChoiceCell>
                    </Row>
                  ))}
                </Rows>
                <InnerScroll><Arrow $c="#b5b5b5" $s={4} /><InnerThumb /></InnerScroll>
              </TableBody>
            </Table>
          </Card>
        </Main>
        <PageScroll>
          <Arrow $c="#a0a0a0" $s={4} />
          <PageThumb />
          <Arrow $c="#505050" $s={4} $down />
        </PageScroll>
      </Page>

      <Downloads>
        <DownloadItem>
          <svg width="16" height="18" viewBox="0 0 16 18"><path d="M2.500 1.500h8l3 3v12h-11z" fill="#fff" stroke="#8c8c8c" /><rect x="4" y="5" width="8" height="8" fill="#1478d4" /><path d="M5 7l1.500 2L8 7l1.500 3L11 7" stroke="#fff" fill="none" /></svg>
          <span>cutmypic.png</span>
          <svg width="10" height="7" viewBox="0 0 10 7" fill="none" stroke="#5a5a5a" strokeWidth="2"><path d="M1 6l4-4 4 4" /></svg>
        </DownloadItem>
        <ShowAll>Hiển thị tất cả</ShowAll>
        <svg width="9" height="9" viewBox="0 0 9 9" stroke="#5a5a5a" strokeWidth="2"><path d="M.7.700l7.600 7.600M8.300.700L.7 8.300" /></svg>
      </Downloads>

      <Taskbar>
        <Start>
          <svg width="16" height="16" viewBox="0 0 16 16" fill="#fff"><path d="M0 2.300L6.500 1.400V7.600H0zM7.300 1.300L16 0v7.600H7.300zM0 8.400h6.500v6.200L0 13.700zM7.300 8.400H16V16l-8.700-1.300z" /></svg>
        </Start>
        <SearchBox>
          <Ring />
          <span>Type here to search</span>
          <svg width="12" height="17" viewBox="0 0 12 17" fill="none" stroke="#a0a0a0"><path d="M3.500.5h5v10h-5zM1 7.500v5.500h10V7.500M6 13v3M3 16.500h6" /></svg>
        </SearchBox>
        <TaskView>
          <svg width="21" height="16" viewBox="0 0 21 16" fill="none" stroke="#fff" strokeWidth="1.200"><path d="M4.500 1h12v14h-12zM3 3H1v10h2M18 3h2v10h-2" /></svg>
        </TaskView>
        {taskIcons.map((t, i) => <TaskSlot key={i} $open={t.open} $bg={t.bg} $line={t.line}>{t.el}</TaskSlot>)}
        <Tray>
          <TrayGlyph $w={22}><svg width="12" height="8" viewBox="0 0 12 8" fill="none" stroke="#fff" strokeWidth="1.200"><path d="M1 7l5-5 5 5" /></svg></TrayGlyph>
          <TrayGlyph $w={23}><svg width="16" height="16" viewBox="0 0 16 16"><rect width="16" height="16" fill="#e7a6a6" /><rect x="1" y="1" width="14" height="14" fill="#f6dede" /><path d="M3.500 3.500l4.200 9.500 4.600-9.500" fill="none" stroke="#c62828" strokeWidth="2.200" /></svg></TrayGlyph>
          <TrayGlyph $w={24}><svg width="16" height="15" viewBox="0 0 16 15" fill="none" stroke="#fff"><path d="M4.500 2.500h11v8h-11zM10 10.500v3M6 13.500h8M.5.5h4v4h-4zM2.500 4.500v7" /></svg></TrayGlyph>
          <TrayGlyph $w={27}><svg width="15" height="13" viewBox="0 0 15 13" fill="none" stroke="#fff"><path d="M.5 4.500h2l4-4v12l-4-4h-2zM9.500 4.500l4 4M13.500 4.500l-4 4" /></svg></TrayGlyph>
          <span>ENG</span>
          <Clock>5:41 PM<br />7/24/2017</Clock>
          <svg width="17" height="17" viewBox="0 0 17 17" fill="none" stroke="#fff" strokeWidth="1.200"><path d="M1 1h15v11.500h-5L8.500 15.500 7 12.500H1z" /></svg>
          <ShowDesktop />
        </Tray>
      </Taskbar>

      <HighlightBox />
      <Annotation>{"chọn quốc gia xog thì\nsave draft"}</Annotation>
      <Watermark><strong>Activate Windows</strong>Go to Settings to activate Windows.</Watermark>
      <StatusBubble>javascript:</StatusBubble>
    </Screen>
  );
}
